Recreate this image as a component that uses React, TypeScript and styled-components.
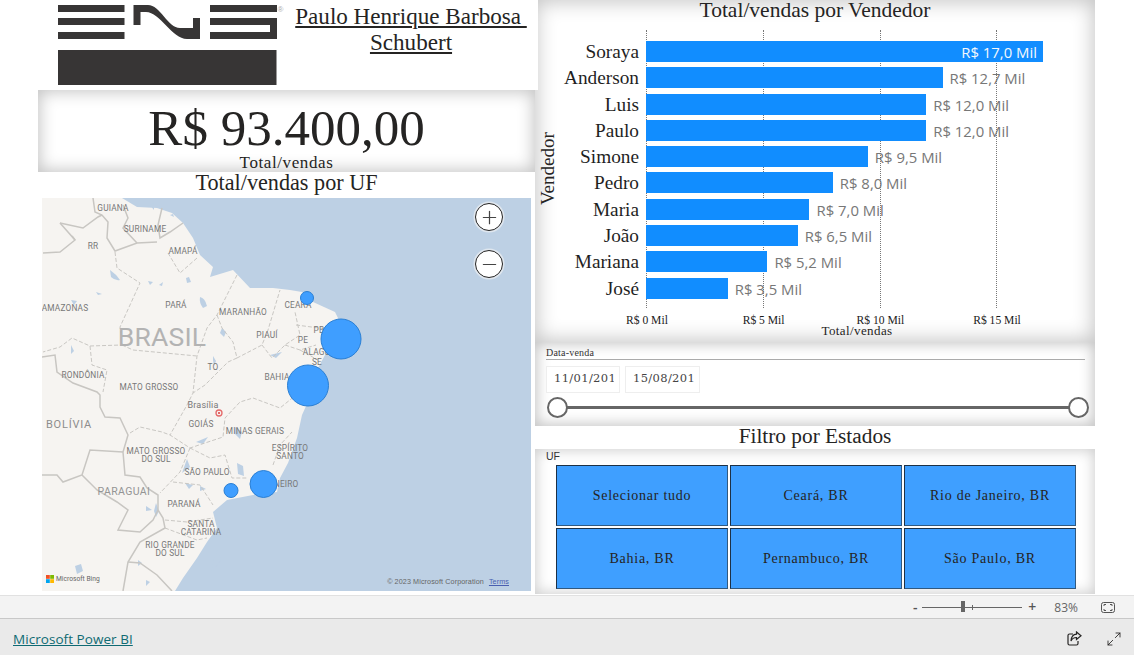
import React from "react";
import styled, { createGlobalStyle } from "styled-components";
import { Plus, Minus, Maximize2 } from "lucide-react";

const serif = `"Liberation Serif", "Times New Roman", serif`;
const sans = `"Open Sans", "Liberation Sans", sans-serif`;

const Global = createGlobalStyle`
  html, body { margin: 0; padding: 0; background: #fff; overflow: hidden; }
  #root { width: 1134px; height: 655px; }
  * { box-sizing: border-box; }
`;

const Page = styled.div`
  width: 1134px; height: 655px; display: flex; flex-direction: column;
  font-family: ${serif}; color: #252423;
`;
const Canvas = styled.main`
  height: 595px; padding-left: 38px; display: flex; background: #fff; flex: none;
`;
const LeftColumn = styled.section`
  width: 497px; display: flex; flex-direction: column; position: relative; z-index: 1;
`;
const RightColumn = styled.section`
  width: 560px; display: flex; flex-direction: column;
`;
const Header = styled.header`
  height: 90px; width: 500px; background: #fff; display: flex; padding: 5px 0 0 20px; flex: none;
`;
const Logo = styled.svg`
  width: 232px; height: 80px; flex: none;
`;
const Name = styled.h1`
  margin: -2px 0 0; flex: 1; padding: 0 8px 0 2px; font-weight: 400; font-size: 23.1px; line-height: 26px;
  text-align: center; text-decoration: underline; color: #252423; white-space: pre-wrap;
`;
const KpiCard = styled.div`
  height: 82px; background: #fff; box-shadow: inset 0 0 16px 2px #c4c4c4; flex: none;
  display: flex; flex-direction: column; align-items: center; padding-top: 11px;
`;
const KpiValue = styled.div`
  font-size: 51px; line-height: 54px; height: 54px; color: #252423;
`;
const KpiLabel = styled.div`
  font-size: 17px; line-height: 16px; letter-spacing: 0.6px; color: #252423;
`;
const VisualTitle = styled.h2`
  margin: 0; font-weight: 400; text-align: center; color: #252423; flex: none;
  font-size: ${p => p.$size}px; height: ${p => p.$h}px; line-height: ${p => p.$lh}px;
`;
const MapWrap = styled.div`
  position: relative; width: 489px; height: 393px; margin: 0 0 0 4px; overflow: hidden; background: #bdd0e4;
`;
const MapSvg = styled.svg`
  display: block; width: 489px; height: 393px;
`;
const MapButton = styled.button`
  position: absolute; left: 433px; top: ${p => p.$top}px; width: 28px; height: 28px; padding: 0;
  border-radius: 50%; background: #fff; border: 1.5px solid #252423; box-shadow: 0 0 0 1.5px #dfe6ee;
  display: flex; align-items: center; justify-content: center; color: #444;
`;
const BingMark = styled.div`
  position: absolute; left: 4px; bottom: 8px; display: flex; align-items: center; gap: 2px;
  font: 6.7px "Roboto", sans-serif; color: #666;
`;
const Copyright = styled.div`
  position: absolute; right: 22px; bottom: 5px; display: flex; gap: 5px;
  font: 7.2px "Liberation Sans", sans-serif; color: #666; letter-spacing: 0.1px;
`;
const TermsLink = styled.a`
  color: #4a5fb0; text-decoration: underline;
`;
const ChartCard = styled.div`
  height: 342px; background: #fff; box-shadow: inset 0 0 20px 2px #c4c4c4; display: flex; flex-direction: column; flex: none;
`;
const PlotRow = styled.div`
  display: flex; margin-top: 8px; height: 278px; flex: none;
`;
const AxisTitleY = styled.div`
  width: 20px; margin-left: 4px; writing-mode: vertical-rl; transform: rotate(180deg);
  font-size: 19px; line-height: 18px; text-align: center; color: #252423;
`;
const Plot = styled.div`
  flex: 1; position: relative; padding-top: 11px; display: flex; flex-direction: column; gap: 5.3px;
`;
const GridLine = styled.i`
  position: absolute; top: 0; bottom: 0; width: 0; border-left: 1px dotted #777;
  left: ${p => p.$x}px;
`;
const BarRow = styled.div`
  display: flex; align-items: center; height: 21px; position: relative; flex: none;
`;
const RowName = styled.div`
  width: 80px; margin-right: 7px; font-size: 19.3px; line-height: 21px; color: #1f1f1f;
  white-space: nowrap; display: flex; justify-content: flex-end;
`;
const Bar = styled.div`
  height: 21px; background: #118dff; flex: none; display: flex; justify-content: flex-end; align-items: center;
`;
const DataLabel = styled.span`
  font: 14.9px ${sans}; white-space: nowrap; line-height: 21px; position: relative; top: 1px;
  color: ${p => (p.$inside ? "#f4f8fc" : "#777")};
  padding: ${p => (p.$inside ? "0 6px 0 0" : "0 0 0 7px")};
`;
const Ticks = styled.div`
  display: flex; margin: 5px 0 0 53.6px; height: 15px; flex: none;
`;
const Tick = styled.div`
  width: 116.7px; text-align: center; font-size: 11.6px; line-height: 15px; color: #1a1a1a; flex: none;
`;
const AxisTitleX = styled.div`
  text-align: center; margin-top: -3px; padding-left: 84px; font-size: 13px; line-height: 12px; letter-spacing: 0.4px; color: #252423;
`;
const SlicerCard = styled.div`
  height: 84px; background: #fff; box-shadow: inset 0 0 14px 2px #c4c4c4; padding: 5px 10px 0 11px; flex: none;
`;
const SlicerHead = styled.div`
  font-size: 10px; line-height: 11px; height: 13px; border-bottom: 1.5px solid #aaa; color: #333; letter-spacing: 0.2px;
`;
const DateRow = styled.div`
  display: flex; gap: 5px; margin-top: 6px;
`;
const DateBox = styled.div`
  width: ${p => p.$w}px; height: 27px; border: 1px solid #eee; padding: 0 5px 0 7px; background: #fff;
`;
const DateText = styled.div`
  overflow: hidden; white-space: nowrap;
  font: 11.5px/23px "DejaVu Serif", serif; color: #444; letter-spacing: 0.35px;
`;
const SliderTrack = styled.div`
  position: relative; height: 3px; background: #666; margin: 13px 7px 0 12px;
`;
const SliderKnob = styled.span`
  position: absolute; top: -9px; width: 21px; height: 21px; border-radius: 50%; background: #fff;
  border: 2px solid #666; ${p => (p.$end ? "right: -11px;" : "left: -11px;")}
`;
const TilesCard = styled.div`
  height: 145px; background: #fff; box-shadow: inset 0 0 14px 1px #ccc; padding: 2px 19px 0 11px; display: flex; flex-direction: column; flex: none;
`;
const TilesLabel = styled.div`
  font: 10.5px/11px "Liberation Sans", sans-serif; color: #333; height: 14px;
`;
const TileGrid = styled.div`
  display: grid; grid-template-columns: repeat(3, 172px); grid-auto-rows: 61px; gap: 2px; margin-left: 10px;
`;
const Tile = styled.div`
  background: #3f9fff; border: 1.5px solid #31597f; border-top-color: #1d3146; border-left-color: #1d3146;
  display: flex; align-items: center; justify-content: center; font-size: 14px; letter-spacing: 0.75px; color: #252423;
`;
const ZoomBar = styled.div`
  height: 23px; flex: none; background: #f3f3f3; border-top: 1px solid #e1e1e1; display: flex; align-items: center;
  justify-content: flex-end; padding-right: 19px; font-family: ${sans}; color: #666;
`;
const ZoomSign = styled.span`
  font-size: 14px; line-height: 14px; font-weight: 600; width: ${p => p.$w}px; text-align: center; color: #555; flex: none;
`;
const ZoomTrack = styled.div`
  width: 100px; height: 1px; background: #666; position: relative; flex: none; margin: 0 3px 0 2px;
`;
const ZoomThumb = styled.i`
  position: absolute; left: 39px; top: -6px; width: 4px; height: 11px; background: #666;
`;
const ZoomMark = styled.i`
  position: absolute; left: 50px; top: -2px; width: 1px; height: 5px; background: #666;
`;
const ZoomValue = styled.span`
  font-size: 12px; margin: 0 23px 0 15px; color: #666; flex: none;
`;
const Footer = styled.footer`
  flex: 1; background: #eaeaea; border-top: 1px solid #c8c8c8; display: flex; align-items: center;
  justify-content: space-between; padding: 3px 12px 0 13px;
`;
const PowerBiLink = styled.a`
  font: 500 13.5px ${sans}; color: #0f6a73; text-decoration: underline; letter-spacing: 0.05px;
`;
const FooterIcons = styled.div`
  display: flex; align-items: center; gap: 24px; color: #252423;
`;

const SCALE = 23.35;
const sellers: [string, number, string][] = [
  ["Soraya", 17, "R$ 17,0 Mil"],
  ["Anderson", 12.7, "R$ 12,7 Mil"],
  ["Luis", 12, "R$ 12,0 Mil"],
  ["Paulo", 12, "R$ 12,0 Mil"],
  ["Simone", 9.5, "R$ 9,5 Mil"],
  ["Pedro", 8, "R$ 8,0 Mil"],
  ["Maria", 7, "R$ 7,0 Mil"],
  ["João", 6.5, "R$ 6,5 Mil"],
  ["Mariana", 5.2, "R$ 5,2 Mil"],
  ["José", 3.5, "R$ 3,5 Mil"],
];
const tiles = ["Selecionar tudo", "Ceará, BR", "Rio de Janeiro, BR", "Bahia, BR", "Pernambuco, BR", "São Paulo, BR"];

const intl = [
  "M93 198 L95 212 L102 215 L108 222 L107 238 L115 251 L137 243 L157 242",
  "M123 205 L128 218 L123 228 L137 243",
  "M162 208 L158 225 L160 238 L170 232 L183 223",
  "M60 223 L75 240 L60 252 L43 253",
  "M60 223 L83 228 L98 217 L102 215",
  "M75 240 L72 236",
  "M42 357 L55 355 L57 372 L73 383 L97 392 L100 395 L100 407 L105 417 L120 418 L128 435 L123 452 L125 475 L140 477 L147 488 L158 495 L158 510 L163 518 L165 528 L140 542 L128 562 L123 591",
  "M123 452 L90 450 L82 475 L63 482 L57 475 L42 475",
  "M82 475 L97 490 L117 502 L128 510 L118 530 L140 532 L153 520 L158 510",
  "M128 562 L140 563 L157 575 L172 591",
];
const states = [
  "M168 253 L180 273 L197 258",
  "M115 252 L117 268 L140 283 L120 327 L122 345 L90 346 L72 338 L60 347 L43 352",
  "M90 346 L92 365 L107 370 L103 392",
  "M122 345 L133 350 L197 356",
  "M237 275 L217 315 L207 328 L197 356 L193 393 L187 405 L170 435",
  "M217 315 L222 328 L233 342 L237 358 L262 345 L268 330 L280 290",
  "M237 358 L228 362 L205 385 L193 393",
  "M262 345 L272 358 L285 345 L300 335 L295 312",
  "M285 345 L300 350 L316 345",
  "M296 325 L335 330",
  "M300 350 L318 360",
  "M130 433 L140 427 L162 432 L170 435 L190 448 L223 437 L225 418 L240 402 L253 398 L280 408 L296 395",
  "M190 448 L210 458 L225 455 L232 478 L247 478",
  "M190 448 L180 472 L160 493",
  "M173 482 L200 485 L213 505",
  "M273 465 L280 445 L292 432",
  "M165 520 L187 522 L213 518",
  "M165 528 L197 540 L207 538",
];
const lakes = [
  "M110 270 q6 4 10 10 q-5 1 -9 -3 z", "M96 292 l6 2 l-4 1 z", "M148 281 l5 1 l-3 3 z", "M159 285 l4 -3 l-1 4 z",
  "M186 278 l3 -1 l2 5 l-4 1 z", "M200 297 q5 1 7 9 l-4 2 q-4 -5 -3 -11 z", "M71 300 l6 1 l-3 4 z", "M222 328 l4 4 l-2 5 l-4 -4 z",
  "M150 205 l4 -2 l0 7 z", "M170 215 l3 -1 l1 3 z", "M71 345 l3 6 l-3 3 z", "M213 356 l3 5 l-2 5 l-1 -6 z",
  "M270 355 l12 -3 l-6 6 z", "M196 442 l12 -5 l-5 7 z", "M235 427 l7 5 l-2 7 l-6 -6 z", "M237 463 l6 3 l1 10 l-6 -2 z",
  "M187 459 l3 8 l-8 6 z", "M185 483 l8 2 l-4 4 z", "M200 486 l6 3 l-6 2 z", "M156 503 l3 8 l-3 6 l-2 -6 z", "M146 506 l6 4 l-6 1 z",
  "M75 566 l6 -2 l2 7 l-6 3 z", "M215 555 l3 -5 l3 10 l-6 8 l-4 4 z", "M138 560 l4 3 l-4 3 z", "M146 580 l4 2 l-4 4 z",
];
const labels: [string, number, number][] = [
  ["GUIANA", 113, 211], ["SURINAME", 145, 232], ["RR", 93, 249], ["AMAPÁ", 183, 254], ["AMAZONAS", 65, 311], ["PARÁ", 176, 308],
  ["MARANHÃO", 243, 315], ["PIAUÍ", 267, 338], ["CEARÁ", 298, 308], ["PB", 319, 333], ["PE", 303, 343], ["ALAGOAS", 322, 355], ["SE", 317, 365],
  ["BAHIA", 277, 380], ["TO", 213, 370], ["RONDÔNIA", 83, 378], ["MATO GROSSO", 149, 390], ["GOIÁS", 201, 427], ["MINAS GERAIS", 255, 434],
  ["MATO GROSSO", 156, 454], ["DO SUL", 156, 462], ["ESPÍRITO", 290, 451], ["SANTO", 290, 459], ["SÃO PAULO", 207, 475], ["JANEIRO", 281, 487],
  ["PARANÁ", 184, 507], ["SANTA", 201, 527], ["CATARINA", 201, 535], ["RIO GRANDE", 170, 548], ["DO SUL", 170, 556],
];
const bubbles: [number, number, number][] = [[307, 298, 6.5], [341, 339, 20], [308, 385.5, 20.5], [263.5, 484, 13.5], [231, 490.5, 7]];

const App: React.FC = () => (
  <Page>
    <Global />
    <Canvas>
      <LeftColumn>
        <Header>
          <Logo viewBox="58 5 232 80">
            <g fill="#373535">
              <rect x="58" y="5" width="66.5" height="7" />
              <rect x="58" y="18" width="66.5" height="7" />
              <rect x="58" y="32" width="66.5" height="7" />
              <path d="M133.5 25V5H148C160 5 168 28 180 28H193V18H200V39H187C172 39 160 12 146 12H140.5V25Z" />
              <rect x="210" y="5" width="67" height="7" />
              <path d="M210 18H277V39H210V32H270V25H210Z" />
              <rect x="58" y="50" width="218.5" height="35" />
            </g>
            <text x="277.5" y="12" fontSize="8" fill="#aaa" fontFamily="Liberation Sans">®</text>
          </Logo>
          <Name>Paulo Henrique Barbosa {"\n"}Schubert</Name>
        </Header>
        <KpiCard>
          <KpiValue>R$ 93.400,00</KpiValue>
          <KpiLabel>Total/vendas</KpiLabel>
        </KpiCard>
        <VisualTitle $h={26} $lh={22} $size={22.2}>Total/vendas por UF</VisualTitle>
        <MapWrap>
          <MapSvg viewBox="42 198 489 393">
            <rect x="42" y="198" width="489" height="393" fill="#bdd0e4" />
            <path
              d="M42 198H122L137 207L157 208L172 213L183 223L193 238L200 255L213 267L210 277L233 270L250 288L273 288L290 290L302 292L313 302L335 312L338 318L325 355L318 368L311 395L302 415L297 438L288 463L280 478L277 492L253 495L227 500L213 512L217 528L207 542L197 558L183 578L175 591H42Z"
              fill="#f6f4f1"
            />
            {lakes.map((d, i) => <path key={i} d={d} fill="#bdd0e4" />)}
            {states.map((d, i) => <path key={i} d={d} fill="none" stroke="#c9c7c3" strokeWidth="1" strokeDasharray="4 2" />)}
            {intl.map((d, i) => <path key={i} d={d} fill="none" stroke="#c8c6c2" strokeWidth="1.5" />)}
            <g fontFamily="Roboto, sans-serif" fontSize="8.3" fill="#777" textAnchor="middle" letterSpacing="0.2">
              {labels.map(([t, x, y], i) => <text key={i} x={x} y={y}>{t}</text>)}
              <text x="69" y="428" fontSize="11" fill="#8d8d8d" letterSpacing="0.8">BOLÍVIA</text>
              <text x="124" y="495" fontSize="10.5" fill="#949494" letterSpacing="0.4">PARAGUAI</text>
              <text x="162" y="346" fontSize="26.5" fill="#b3b3b3">BRASIL</text>
              <text x="203" y="408" fontSize="9" fill="#777">Brasília</text>
            </g>
            <circle cx="219" cy="413" r="3" fill="none" stroke="#e56a6a" strokeWidth="1.3" />
            <circle cx="219" cy="413" r="1" fill="#d83b3b" />
            {bubbles.map(([x, y, r], i) => <circle key={i} cx={x} cy={y} r={r} fill="#3f9eff" stroke="#2b7fd3" strokeWidth="1" />)}
          </MapSvg>
          <MapButton $top={5}><Plus size={21} strokeWidth={1.4} /></MapButton>
          <MapButton $top={52}><Minus size={21} strokeWidth={1.4} /></MapButton>
          <BingMark>
            <svg width="8" height="8" viewBox="0 0 8 8">
              <rect width="3.8" height="3.8" fill="#f25022" />
              <rect x="4.2" width="3.8" height="3.8" fill="#7fba00" />
              <rect y="4.2" width="3.8" height="3.8" fill="#00a4ef" />
              <rect x="4.2" y="4.2" width="3.8" height="3.8" fill="#ffb900" />
            </svg>
            Microsoft Bing
          </BingMark>
          <Copyright>© 2023 Microsoft Corporation <TermsLink>Terms</TermsLink></Copyright>
        </MapWrap>
      </LeftColumn>
      <RightColumn>
        <ChartCard>
          <VisualTitle $h={22} $lh={21} $size={21.5}>Total/vendas por Vendedor</VisualTitle>
          <PlotRow>
            <AxisTitleY>Vendedor</AxisTitleY>
            <Plot>
              {[0, 1, 2, 3].map(i => <GridLine key={i} $x={87 + i * SCALE * 5} />)}
              {sellers.map(([name, v, label]) => (
                <BarRow key={name}>
                  <RowName>{name}</RowName>
                  <Bar style={{ width: v * SCALE }}>{v === 17 && <DataLabel $inside>{label}</DataLabel>}</Bar>
                  {v !== 17 && <DataLabel>{label}</DataLabel>}
                </BarRow>
              ))}
            </Plot>
          </PlotRow>
          <Ticks>
            {["R$ 0 Mil", "R$ 5 Mil", "R$ 10 Mil", "R$ 15 Mil"].map(t => <Tick key={t}>{t}</Tick>)}
          </Ticks>
          <AxisTitleX>Total/vendas</AxisTitleX>
        </ChartCard>
        <SlicerCard>
          <SlicerHead>Data-venda</SlicerHead>
          <DateRow>
            <DateBox $w={74}><DateText>11/01/2015</DateText></DateBox>
            <DateBox $w={75}><DateText>15/08/2017</DateText></DateBox>
          </DateRow>
          <SliderTrack>
            <SliderKnob />
            <SliderKnob $end />
          </SliderTrack>
        </SlicerCard>
        <VisualTitle $h={23} $lh={21} $size={21.3}>Filtro por Estados</VisualTitle>
        <TilesCard>
          <TilesLabel>UF</TilesLabel>
          <TileGrid>
            {tiles.map(t => <Tile key={t}>{t}</Tile>)}
          </TileGrid>
        </TilesCard>
      </RightColumn>
    </Canvas>
    <ZoomBar>
      <ZoomSign $w={10}>-</ZoomSign>
      <ZoomTrack>
        <ZoomThumb />
        <ZoomMark />
      </ZoomTrack>
      <ZoomSign $w={14}>+</ZoomSign>
      <ZoomValue>83%</ZoomValue>
      <svg width="14" height="11" viewBox="0 0 14 11" fill="none" stroke="#555" strokeWidth="1">
        <rect x="0.5" y="0.5" width="13" height="10" rx="2" />
        <path d="M3 4V2.5H5M9 2.5H11V4M3 7V8.5H5M9 8.5H11V7" />
      </svg>
    </ZoomBar>
    <Footer>
      <PowerBiLink>Microsoft Power BI</PowerBiLink>
      <FooterIcons>
        <svg width="15" height="15" viewBox="0 0 15 15" fill="none" stroke="#252423" strokeWidth="1.2">
          <path d="M6 3H2.5Q1 3 1 4.5V12.5Q1 14 2.5 14H9.5Q11 14 11 12.5V10" />
          <path d="M9.5 1L14 4.8L9.5 8.5V6.5Q5.5 6.5 4 10Q4.5 3.5 9.5 3.2Z" />
        </svg>
        <Maximize2 size={16} strokeWidth={1.3} />
      </FooterIcons>
    </Footer>
  </Page>
);

export default App;
